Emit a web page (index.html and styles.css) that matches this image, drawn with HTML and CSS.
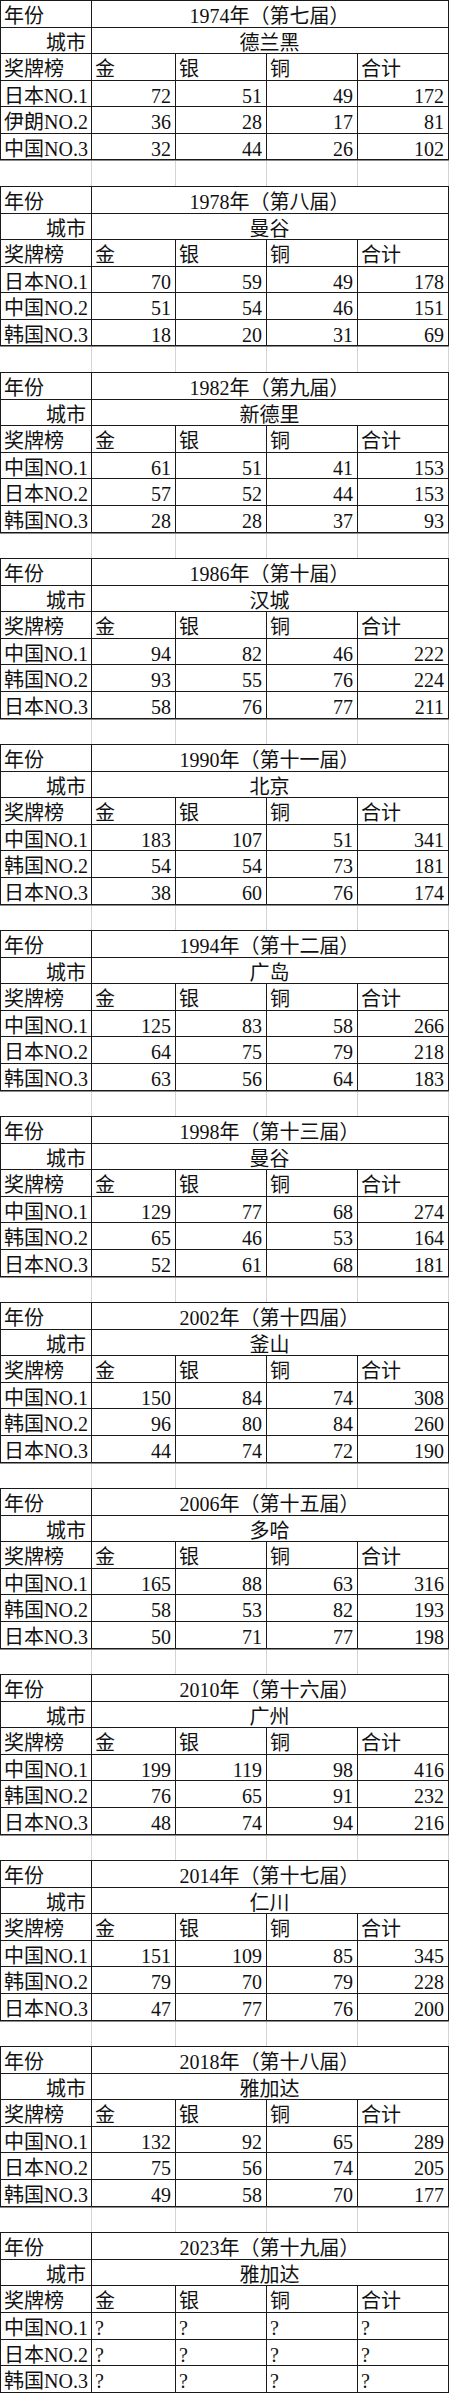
FILE: index.html
```html
<!DOCTYPE html>
<html lang="zh-CN">
<head>
<meta charset="utf-8">
<title>亚运会奖牌榜</title>
<link rel="stylesheet" href="styles.css">
</head>
<body>
<main class="page">

<section class="block">
<div class="sheet">
<div class="c">年份</div><div class="c span">1974年（第七届）</div>
<div class="c city">城市</div><div class="c span">德兰黑</div>
<div class="c">奖牌榜</div><div class="c">金</div><div class="c">银</div><div class="c">铜</div><div class="c">合计</div>
<div class="c">日本NO.1</div><div class="c num">72</div><div class="c num">51</div><div class="c num">49</div><div class="c num">172</div>
<div class="c">伊朗NO.2</div><div class="c num">36</div><div class="c num">28</div><div class="c num">17</div><div class="c num">81</div>
<div class="c">中国NO.3</div><div class="c num">32</div><div class="c num">44</div><div class="c num">26</div><div class="c num">102</div>
</div>
<div class="gap"><span></span><span></span><span></span><span></span><span></span></div>
</section>

<section class="block">
<div class="sheet">
<div class="c">年份</div><div class="c span">1978年（第八届）</div>
<div class="c city">城市</div><div class="c span">曼谷</div>
<div class="c">奖牌榜</div><div class="c">金</div><div class="c">银</div><div class="c">铜</div><div class="c">合计</div>
<div class="c">日本NO.1</div><div class="c num">70</div><div class="c num">59</div><div class="c num">49</div><div class="c num">178</div>
<div class="c">中国NO.2</div><div class="c num">51</div><div class="c num">54</div><div class="c num">46</div><div class="c num">151</div>
<div class="c">韩国NO.3</div><div class="c num">18</div><div class="c num">20</div><div class="c num">31</div><div class="c num">69</div>
</div>
<div class="gap"><span></span><span></span><span></span><span></span><span></span></div>
</section>

<section class="block">
<div class="sheet">
<div class="c">年份</div><div class="c span">1982年（第九届）</div>
<div class="c city">城市</div><div class="c span">新德里</div>
<div class="c">奖牌榜</div><div class="c">金</div><div class="c">银</div><div class="c">铜</div><div class="c">合计</div>
<div class="c">中国NO.1</div><div class="c num">61</div><div class="c num">51</div><div class="c num">41</div><div class="c num">153</div>
<div class="c">日本NO.2</div><div class="c num">57</div><div class="c num">52</div><div class="c num">44</div><div class="c num">153</div>
<div class="c">韩国NO.3</div><div class="c num">28</div><div class="c num">28</div><div class="c num">37</div><div class="c num">93</div>
</div>
<div class="gap"><span></span><span></span><span></span><span></span><span></span></div>
</section>

<section class="block">
<div class="sheet">
<div class="c">年份</div><div class="c span">1986年（第十届）</div>
<div class="c city">城市</div><div class="c span">汉城</div>
<div class="c">奖牌榜</div><div class="c">金</div><div class="c">银</div><div class="c">铜</div><div class="c">合计</div>
<div class="c">中国NO.1</div><div class="c num">94</div><div class="c num">82</div><div class="c num">46</div><div class="c num">222</div>
<div class="c">韩国NO.2</div><div class="c num">93</div><div class="c num">55</div><div class="c num">76</div><div class="c num">224</div>
<div class="c">日本NO.3</div><div class="c num">58</div><div class="c num">76</div><div class="c num">77</div><div class="c num">211</div>
</div>
<div class="gap"><span></span><span></span><span></span><span></span><span></span></div>
</section>

<section class="block">
<div class="sheet">
<div class="c">年份</div><div class="c span">1990年（第十一届）</div>
<div class="c city">城市</div><div class="c span">北京</div>
<div class="c">奖牌榜</div><div class="c">金</div><div class="c">银</div><div class="c">铜</div><div class="c">合计</div>
<div class="c">中国NO.1</div><div class="c num">183</div><div class="c num">107</div><div class="c num">51</div><div class="c num">341</div>
<div class="c">韩国NO.2</div><div class="c num">54</div><div class="c num">54</div><div class="c num">73</div><div class="c num">181</div>
<div class="c">日本NO.3</div><div class="c num">38</div><div class="c num">60</div><div class="c num">76</div><div class="c num">174</div>
</div>
<div class="gap"><span></span><span></span><span></span><span></span><span></span></div>
</section>

<section class="block">
<div class="sheet">
<div class="c">年份</div><div class="c span">1994年（第十二届）</div>
<div class="c city">城市</div><div class="c span">广岛</div>
<div class="c">奖牌榜</div><div class="c">金</div><div class="c">银</div><div class="c">铜</div><div class="c">合计</div>
<div class="c">中国NO.1</div><div class="c num">125</div><div class="c num">83</div><div class="c num">58</div><div class="c num">266</div>
<div class="c">日本NO.2</div><div class="c num">64</div><div class="c num">75</div><div class="c num">79</div><div class="c num">218</div>
<div class="c">韩国NO.3</div><div class="c num">63</div><div class="c num">56</div><div class="c num">64</div><div class="c num">183</div>
</div>
<div class="gap"><span></span><span></span><span></span><span></span><span></span></div>
</section>

<section class="block">
<div class="sheet">
<div class="c">年份</div><div class="c span">1998年（第十三届）</div>
<div class="c city">城市</div><div class="c span">曼谷</div>
<div class="c">奖牌榜</div><div class="c">金</div><div class="c">银</div><div class="c">铜</div><div class="c">合计</div>
<div class="c">中国NO.1</div><div class="c num">129</div><div class="c num">77</div><div class="c num">68</div><div class="c num">274</div>
<div class="c">韩国NO.2</div><div class="c num">65</div><div class="c num">46</div><div class="c num">53</div><div class="c num">164</div>
<div class="c">日本NO.3</div><div class="c num">52</div><div class="c num">61</div><div class="c num">68</div><div class="c num">181</div>
</div>
<div class="gap"><span></span><span></span><span></span><span></span><span></span></div>
</section>

<section class="block">
<div class="sheet">
<div class="c">年份</div><div class="c span">2002年（第十四届）</div>
<div class="c city">城市</div><div class="c span">釜山</div>
<div class="c">奖牌榜</div><div class="c">金</div><div class="c">银</div><div class="c">铜</div><div class="c">合计</div>
<div class="c">中国NO.1</div><div class="c num">150</div><div class="c num">84</div><div class="c num">74</div><div class="c num">308</div>
<div class="c">韩国NO.2</div><div class="c num">96</div><div class="c num">80</div><div class="c num">84</div><div class="c num">260</div>
<div class="c">日本NO.3</div><div class="c num">44</div><div class="c num">74</div><div class="c num">72</div><div class="c num">190</div>
</div>
<div class="gap"><span></span><span></span><span></span><span></span><span></span></div>
</section>

<section class="block">
<div class="sheet">
<div class="c">年份</div><div class="c span">2006年（第十五届）</div>
<div class="c city">城市</div><div class="c span">多哈</div>
<div class="c">奖牌榜</div><div class="c">金</div><div class="c">银</div><div class="c">铜</div><div class="c">合计</div>
<div class="c">中国NO.1</div><div class="c num">165</div><div class="c num">88</div><div class="c num">63</div><div class="c num">316</div>
<div class="c">韩国NO.2</div><div class="c num">58</div><div class="c num">53</div><div class="c num">82</div><div class="c num">193</div>
<div class="c">日本NO.3</div><div class="c num">50</div><div class="c num">71</div><div class="c num">77</div><div class="c num">198</div>
</div>
<div class="gap"><span></span><span></span><span></span><span></span><span></span></div>
</section>

<section class="block">
<div class="sheet">
<div class="c">年份</div><div class="c span">2010年（第十六届）</div>
<div class="c city">城市</div><div class="c span">广州</div>
<div class="c">奖牌榜</div><div class="c">金</div><div class="c">银</div><div class="c">铜</div><div class="c">合计</div>
<div class="c">中国NO.1</div><div class="c num">199</div><div class="c num">119</div><div class="c num">98</div><div class="c num">416</div>
<div class="c">韩国NO.2</div><div class="c num">76</div><div class="c num">65</div><div class="c num">91</div><div class="c num">232</div>
<div class="c">日本NO.3</div><div class="c num">48</div><div class="c num">74</div><div class="c num">94</div><div class="c num">216</div>
</div>
<div class="gap"><span></span><span></span><span></span><span></span><span></span></div>
</section>

<section class="block">
<div class="sheet">
<div class="c">年份</div><div class="c span">2014年（第十七届）</div>
<div class="c city">城市</div><div class="c span">仁川</div>
<div class="c">奖牌榜</div><div class="c">金</div><div class="c">银</div><div class="c">铜</div><div class="c">合计</div>
<div class="c">中国NO.1</div><div class="c num">151</div><div class="c num">109</div><div class="c num">85</div><div class="c num">345</div>
<div class="c">韩国NO.2</div><div class="c num">79</div><div class="c num">70</div><div class="c num">79</div><div class="c num">228</div>
<div class="c">日本NO.3</div><div class="c num">47</div><div class="c num">77</div><div class="c num">76</div><div class="c num">200</div>
</div>
<div class="gap"><span></span><span></span><span></span><span></span><span></span></div>
</section>

<section class="block">
<div class="sheet">
<div class="c">年份</div><div class="c span">2018年（第十八届）</div>
<div class="c city">城市</div><div class="c span">雅加达</div>
<div class="c">奖牌榜</div><div class="c">金</div><div class="c">银</div><div class="c">铜</div><div class="c">合计</div>
<div class="c">中国NO.1</div><div class="c num">132</div><div class="c num">92</div><div class="c num">65</div><div class="c num">289</div>
<div class="c">日本NO.2</div><div class="c num">75</div><div class="c num">56</div><div class="c num">74</div><div class="c num">205</div>
<div class="c">韩国NO.3</div><div class="c num">49</div><div class="c num">58</div><div class="c num">70</div><div class="c num">177</div>
</div>
<div class="gap"><span></span><span></span><span></span><span></span><span></span></div>
</section>

<section class="block">
<div class="sheet">
<div class="c">年份</div><div class="c span">2023年（第十九届）</div>
<div class="c city">城市</div><div class="c span">雅加达</div>
<div class="c">奖牌榜</div><div class="c">金</div><div class="c">银</div><div class="c">铜</div><div class="c">合计</div>
<div class="c">中国NO.1</div><div class="c">?</div><div class="c">?</div><div class="c">?</div><div class="c">?</div>
<div class="c">日本NO.2</div><div class="c">?</div><div class="c">?</div><div class="c">?</div><div class="c">?</div>
<div class="c">韩国NO.3</div><div class="c">?</div><div class="c">?</div><div class="c">?</div><div class="c">?</div>
</div>
</section>

</main>
</body>
</html>
```
FILE: styles.css
```css
html, body {
  margin: 0;
  padding: 0;
  background: #ffffff;
}

.page {
  width: 449px;
  font-family: "Liberation Serif", "Noto Sans CJK SC", serif;
  font-size: 20px;
  color: #111111;
}

.block {
  display: flex;
  flex-direction: column;
}

.sheet {
  display: grid;
  grid-template-columns: 91px 84px 91px 91px 91px;
  grid-auto-rows: 26.58px;
  border-top: 1px solid #1a1a1a;
  border-left: 1px solid #1a1a1a;
}

.c {
  box-sizing: border-box;
  border-right: 1px solid #1a1a1a;
  border-bottom: 1px solid #1a1a1a;
  padding: 4px 4px 0 3px;
  line-height: 22px;
  white-space: nowrap;
  overflow: visible;
}

.span {
  grid-column: 2 / 6;
  text-align: center;
}

.city {
  text-align: right;
  padding-right: 5px;
}

.num {
  text-align: right;
}

.gap {
  display: grid;
  grid-template-columns: 92px 84px 91px 91px 91px;
  height: 25.56px;
  box-sizing: border-box;
  border-top: 1px solid #8a8a8a;
}

.gap span {
  border-right: 1px solid #d4d4d4;
}
```
